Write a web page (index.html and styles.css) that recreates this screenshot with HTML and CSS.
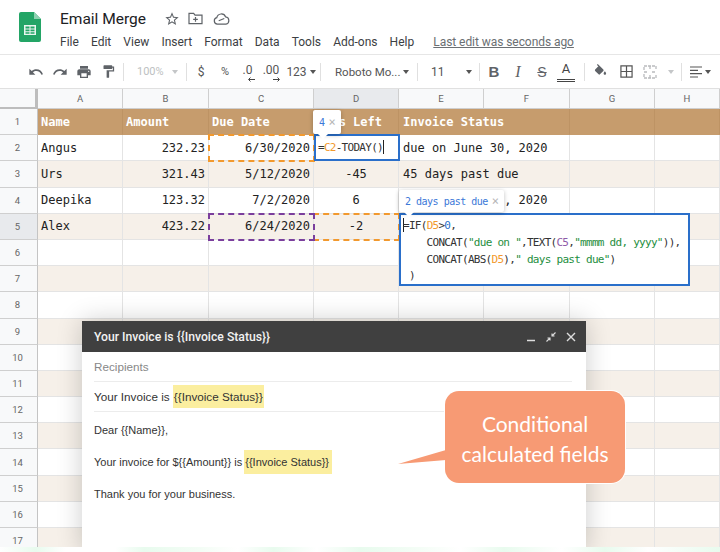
FILE: index.html
```html
<!DOCTYPE html>
<html lang="en">
<head>
    <meta charset="UTF-8">
    <meta name="viewport" content="width=device-width, initial-scale=1.0">
    <title>Email Merge</title>
    <link rel="stylesheet" href="styles.css">
</head>
<body>
<div class="page">
    <header class="top">
        <svg class="logo" viewBox="0 0 22 30" width="22" height="30">
            <path d="M2 0h13l7 7v21a2 2 0 0 1-2 2H2a2 2 0 0 1-2-2V2a2 2 0 0 1 2-2z" fill="#23a566"/>
            <path d="M15 0l7 7h-7z" fill="#8ed1b1"/>
            <path d="M5 13h12v10H5z M6.500 14.500v2h4v-2z M11.500 14.500v2h4v-2z M6.500 17.500v1.800h4v-1.800z M11.500 17.500v1.800h4v-1.800z M6.500 20.300v1.500h4v-1.500z M11.500 20.300v1.500h4v-1.500z" fill="#e8f5ee" fill-rule="evenodd"/>
        </svg>
        <div class="top-main">
            <div class="title-row">
                <span class="doc-title">Email Merge</span>
                <svg class="title-icon star" viewBox="0 0 24 24" width="16" height="16"><path d="M22 9.240l-7.190-.620L12 2 9.190 8.630 2 9.240l5.460 4.730L5.820 21 12 17.270 18.180 21l-1.630-7.030L22 9.240zM12 15.400l-3.760 2.270 1-4.280-3.320-2.880 4.380-.380L12 6.100l1.710 4.040 4.380.380-3.320 2.880 1 4.280L12 15.400z"/></svg>
                <svg class="title-icon" viewBox="0 0 16 14" width="15" height="13"><path d="M1 1.500h5l1.500 1.800H15v9.200H1z" fill="none" stroke="#5f6368" stroke-width="1.300"/><path d="M8 5.500v5M5.500 8h5" stroke="#5f6368" stroke-width="1.300"/></svg>
                <svg class="title-icon" viewBox="0 0 18 13" width="17" height="12"><path d="M4.500 12a3.500 3.500 0 0 1-.6-6.900A5 5 0 0 1 13.500 4.300 3.900 3.900 0 0 1 13.800 12z" fill="none" stroke="#5f6368" stroke-width="1.300"/><path d="M6 8.500l6-2.500" stroke="#5f6368" stroke-width="1.200"/></svg>
            </div>
            <nav class="menu">
                <span>File</span><span>Edit</span><span>View</span><span>Insert</span><span>Format</span><span>Data</span><span>Tools</span><span>Add-ons</span><span>Help</span>
                <a class="last-edit">Last edit was seconds ago</a>
            </nav>
        </div>
    </header>

    <div class="toolbar">
        <span class="tool"><svg viewBox="0 0 24 24" width="16" height="16"><path d="M12.500 8c-2.650 0-5.050.990-6.900 2.600L2 7v9h9l-3.620-3.620c1.390-1.160 3.160-1.880 5.120-1.880 3.540 0 6.550 2.310 7.600 5.500l2.370-.780C21.080 11.030 17.150 8 12.500 8z"/></svg></span>
        <span class="tool"><svg viewBox="0 0 24 24" width="16" height="16"><path d="M18.400 10.600C16.550 8.990 14.150 8 11.500 8c-4.650 0-8.580 3.030-9.960 7.220L3.900 16c1.050-3.190 4.050-5.500 7.600-5.500 1.950 0 3.730.720 5.120 1.880L13 16h9V7l-3.600 3.600z"/></svg></span>
        <span class="tool"><svg viewBox="0 0 24 24" width="16" height="16"><path d="M19 8H5c-1.660 0-3 1.340-3 3v6h4v4h12v-4h4v-6c0-1.660-1.340-3-3-3zm-3 11H8v-5h8v5zm3-7c-.550 0-1-.450-1-1s.450-1 1-1 1 .450 1 1-.450 1-1 1zm-1-9H6v4h12V3z"/></svg></span>
        <span class="tool"><svg viewBox="0 0 24 24" width="15" height="15"><path d="M18 4V3c0-.550-.450-1-1-1H5c-.550 0-1 .450-1 1v4c0 .550.450 1 1 1h12c.550 0 1-.450 1-1V6h1v4H9v11c0 .550.450 1 1 1h2c.550 0 1-.450 1-1v-9h8V4h-3z"/></svg></span>
        <i class="sep sep-a"></i>
        <span class="tool zoom-box off">100%<b class="caret off-caret"></b></span>
        <i class="sep sep-b"></i>
        <span class="tool">$</span>
        <span class="tool pct">%</span>
        <span class="tool dec w21">.0<svg viewBox="0 0 8 5" width="8" height="5"><path d="M8 2.500H2M3.500.500l-2 2 2 2" fill="none" stroke="#444" stroke-width="1"/></svg></span>
        <span class="tool dec w26">.00<svg viewBox="0 0 8 5" width="8" height="5"><path d="M0 2.500h6M4.500.500l2 2-2 2" fill="none" stroke="#444" stroke-width="1"/></svg></span>
        <span class="tool w34">123<b class="caret"></b></span>
        <i class="sep sep-c"></i>
        <span class="tool font-box">Roboto Mo...<b class="caret"></b></span>
        <i class="sep sep-d"></i>
        <span class="tool size-box">11<b class="caret"></b></span>
        <i class="sep sep-e"></i>
        <span class="tool bold">B</span>
        <span class="tool ital">I</span>
        <span class="tool strike">S</span>
        <span class="tool color-a">A</span>
        <i class="sep sep-f"></i>
        <span class="tool"><svg viewBox="0 0 24 24" width="15" height="15"><path d="M16.560 8.940L7.620 0 6.210 1.410l2.380 2.380-5.150 5.150c-.590.590-.590 1.540 0 2.120l5.500 5.500c.290.290.680.440 1.060.440s.770-.150 1.060-.440l5.500-5.500c.590-.580.590-1.530 0-2.120zM19 11.500s-2 2.170-2 3.500c0 1.100.9 2 2 2s2-.9 2-2c0-1.330-2-3.500-2-3.500z"/></svg></span>
        <span class="tool grid-icon"><svg viewBox="0 0 14 14" width="13" height="13"><path d="M1 1h12v12H1zM7 1v12M1 7h12" fill="none" stroke="#555" stroke-width="1.300"/></svg></span>
        <span class="tool"><svg viewBox="0 0 14 14" width="14" height="14"><path d="M1 5V1h12v4M1 9v4h12V9M7 1v3M7 10v3M1 7h4M9 7h4" fill="none" stroke="#b9bbbd" stroke-width="1.300" stroke-dasharray="3 1"/></svg></span>
        <span class="tool w14"><b class="caret off-caret"></b></span>
        <i class="sep sep-g"></i>
        <span class="tool align"><svg viewBox="0 0 12 12" width="12" height="12"><path d="M0 1h12M0 4.300h8M0 7.700h12M0 11h8" stroke="#555" stroke-width="1.200"/></svg><b class="caret"></b></span>
    </div>

    <div class="sheet">
        <div class="corner"></div><div class="col">A</div><div class="col">B</div><div class="col">C</div><div class="col active">D</div><div class="col">E</div><div class="col">F</div><div class="col">G</div><div class="col">H</div>

        <div class="num">1</div><div class="c head">Name</div><div class="c head">Amount</div><div class="c head">Due Date</div><div class="c head days">Days Left</div><div class="c head wide">Invoice Status</div><div class="c head"></div><div class="c head"></div>
        <div class="num">2</div><div class="c">Angus</div><div class="c r">232.23</div><div class="c r dash-orange">6/30/2020</div><div class="c"></div><div class="c wide">due on June 30, 2020</div><div class="c"></div><div class="c"></div>
        <div class="num">3</div><div class="c tan">Urs</div><div class="c tan r">321.43</div><div class="c tan r">5/12/2020</div><div class="c tan m">-45</div><div class="c tan wide">45 days past due</div><div class="c tan"></div><div class="c tan"></div>
        <div class="num">4</div><div class="c">Deepika</div><div class="c r">123.32</div><div class="c r">7/2/2020</div><div class="c m">6</div><div class="c wide">due on July 02, 2020</div><div class="c"></div><div class="c"></div>
        <div class="num active">5</div><div class="c tan">Alex</div><div class="c tan r">423.22</div><div class="c tan r dash-purple">6/24/2020</div><div class="c tan m dash-orange">-2</div><div class="c tan"></div><div class="c tan"></div><div class="c tan"></div><div class="c tan"></div>
        <div class="num">6</div><div class="c"></div><div class="c"></div><div class="c"></div><div class="c"></div><div class="c"></div><div class="c"></div><div class="c"></div><div class="c"></div>
        <div class="num">7</div><div class="c tan"></div><div class="c tan"></div><div class="c tan"></div><div class="c tan"></div><div class="c tan"></div><div class="c tan"></div><div class="c tan"></div><div class="c tan"></div>
        <div class="num">8</div><div class="c"></div><div class="c"></div><div class="c"></div><div class="c"></div><div class="c"></div><div class="c"></div><div class="c"></div><div class="c"></div>
        <div class="num">9</div><div class="c tan"></div><div class="c tan"></div><div class="c tan"></div><div class="c tan"></div><div class="c tan"></div><div class="c tan"></div><div class="c tan"></div><div class="c tan"></div>
        <div class="num">10</div><div class="c"></div><div class="c"></div><div class="c"></div><div class="c"></div><div class="c"></div><div class="c"></div><div class="c"></div><div class="c"></div>
        <div class="num">11</div><div class="c tan"></div><div class="c tan"></div><div class="c tan"></div><div class="c tan"></div><div class="c tan"></div><div class="c tan"></div><div class="c tan"></div><div class="c tan"></div>
        <div class="num">12</div><div class="c"></div><div class="c"></div><div class="c"></div><div class="c"></div><div class="c"></div><div class="c"></div><div class="c"></div><div class="c"></div>
        <div class="num">13</div><div class="c tan"></div><div class="c tan"></div><div class="c tan"></div><div class="c tan"></div><div class="c tan"></div><div class="c tan"></div><div class="c tan"></div><div class="c tan"></div>
        <div class="num">14</div><div class="c"></div><div class="c"></div><div class="c"></div><div class="c"></div><div class="c"></div><div class="c"></div><div class="c"></div><div class="c"></div>
        <div class="num">15</div><div class="c tan"></div><div class="c tan"></div><div class="c tan"></div><div class="c tan"></div><div class="c tan"></div><div class="c tan"></div><div class="c tan"></div><div class="c tan"></div>
        <div class="num">16</div><div class="c"></div><div class="c"></div><div class="c"></div><div class="c"></div><div class="c"></div><div class="c"></div><div class="c"></div><div class="c"></div>
        <div class="num">17</div><div class="c tan"></div><div class="c tan"></div><div class="c tan"></div><div class="c tan"></div><div class="c tan"></div><div class="c tan"></div><div class="c tan"></div><div class="c tan"></div>
    </div>

    <!-- cell editors and hints lie over the grid -->
    <div class="hint hint-days"><span>4</span><em>×</em></div>
    <div class="editor editor-d2">=<span class="ref-orange">C2</span>-TODAY()<i class="text-caret"></i></div>
    <div class="hint hint-status"><span>2 days past due</span><em>×</em></div>
    <div class="editor editor-e5">
        <div class="fx"><i class="text-caret"></i>=IF(<span class="ref-orange">D5</span>&gt;<span class="ref-blue">0</span>,</div>
        <div class="fx fx-in">CONCAT(<span class="str">"due on "</span>,TEXT(<span class="ref-purple">C5</span>,<span class="str">"mmmm dd, yyyy"</span>)),</div>
        <div class="fx fx-in">CONCAT(ABS(<span class="ref-orange">D5</span>),<span class="str">" days past due"</span>)</div>
        <div class="fx fx-end">)</div>
    </div>

    <section class="compose">
        <div class="compose-head">
            <span>Your Invoice is {{Invoice Status}}</span>
            <div class="win-btns">
                <svg viewBox="0 0 10 10" width="10" height="10"><path d="M1 8.500h8" stroke="#ddd" stroke-width="1.500"/></svg>
                <svg viewBox="0 0 10 10" width="10" height="10"><path d="M9.500.500L6 4M6 1.500V4h2.500M.5 9.500L4 6M1.500 6H4v2.500" fill="none" stroke="#ddd" stroke-width="1.100"/></svg>
                <svg viewBox="0 0 10 10" width="10" height="10"><path d="M1 1l8 8M9 1l-8 8" stroke="#ddd" stroke-width="1.400"/></svg>
            </div>
        </div>
        <div class="field recipients">Recipients</div>
        <div class="field subject">Your Invoice is <mark>{{Invoice Status}}</mark></div>
        <div class="mail-body">
            <p>Dear {{Name}},</p>
            <p>Your invoice for ${{Amount}} is <mark>{{Invoice Status}}</mark></p>
            <p>Thank you for your business.</p>
        </div>
    </section>

    <div class="callout">
        <svg class="callout-tail" viewBox="0 0 48 16" width="48" height="16"><path d="M48 0L0 14l48-4z" fill="#f79a74"/></svg>
        Conditional<br>calculated fields
    </div>

    <div class="bottom-strip"></div>
</div>
</body>
</html>
```

FILE: styles.css
```css
* {
    box-sizing: border-box;
}
body {
    margin: 0;
    font-family: Roboto, "Liberation Sans", sans-serif;
    background: #fff;
}
.page {
    position: relative;
    width: 720px;
    height: 552px;
    overflow: hidden;
    background: #fff;
}

/* title and menu */
.top {
    display: flex;
    height: 55px;
    border-bottom: 1px solid #e6e6e6;
    padding: 12px 0 0 19px;
}
.logo {
    margin-right: 19px;
}
.title-row {
    display: flex;
    align-items: center;
    height: 13px;
}
.doc-title {
    font-size: 15.500px;
    color: #202124;
    margin-right: 18px;
}
.title-icon {
    margin-right: 10px;
    fill: #5f6368;
}
.star {
    margin-right: 8px;
}
.menu {
    display: flex;
    margin-top: 7px;
    font-size: 12px;
    line-height: 20px;
    color: #3c4043;
}
.menu span {
    margin-right: 12.100px;
}
.last-edit {
    margin-left: 7px;
    letter-spacing: -.06px;
    color: #6b6f73;
    text-decoration: underline;
}

/* toolbar */
.toolbar {
    display: flex;
    align-items: center;
    height: 34px;
    padding-left: 24px;
    font-size: 12px;
    color: #555;
    border-bottom: 1px solid #e0e0e0;
}
.tool {
    display: flex;
    align-items: center;
    justify-content: center;
    flex: none;
    width: 24px;
    height: 24px;
    fill: #5f6368;
}
.w21 { width: 21px; }
.w26 { width: 26px; }
.w34 { width: 34px; }
.w14 { width: 14px; }
.sep {
    flex: none;
    width: 1px;
    height: 18px;
    background: #e0e0e0;
}
.sep-a { margin: 0 8px 0 3px; }
.sep-b { margin: 0 2px 0 4px; }
.sep-c { margin: 0 6px 0 2px; }
.sep-d { margin: 0 4px; }
.sep-e { margin: 0 2px 0 4px; }
.sep-f { margin: 0 3px 0 6px; }
.sep-g { margin: 0 4px 0 5px; }
.grid-icon { margin-left: 2px; }
.caret {
    display: inline-block;
    width: 0;
    height: 0;
    margin-left: 3px;
    border: 3.500px solid transparent;
    border-top: 4px solid #555;
    border-bottom: 0;
}
.off-caret {
    border-top-color: #c4c6c8;
}
.off {
    color: #bdbfc2;
    font-size: 11px;
}
.zoom-box {
    width: 50px;
    justify-content: space-between;
    padding: 0 4px 0 5px;
}
.font-box {
    width: 86px;
    justify-content: space-between;
    padding: 0 4px 0 8px;
    font-size: 11.500px;
    white-space: nowrap;
}
.size-box {
    width: 53px;
    justify-content: space-between;
    padding: 0 3px 0 9px;
}
.pct {
    font-size: 11px;
}
.dec {
    position: relative;
    font-size: 12px;
    padding-bottom: 3px;
}
.dec svg {
    position: absolute;
    right: 3px;
    bottom: 2px;
}
.bold {
    font-family: "Liberation Sans", sans-serif;
    font-weight: bold;
    font-size: 15px;
    color: #5f6368;
}
.ital {
    font-family: "Liberation Serif", serif;
    font-style: italic;
    font-size: 16px;
    color: #5f6368;
}
.strike {
    font-family: "Liberation Sans", sans-serif;
    font-size: 14px;
    text-decoration: line-through;
    color: #5f6368;
}
.color-a {
    font-size: 13px;
    color: #444;
    height: 21px;
    align-items: flex-start;
    border-bottom: 3px double #444;
    width: 18px;
    margin: 0 3px;
    line-height: 15px;
}
.align {
    width: 36px;
    justify-content: flex-start;
    padding-left: 4px;
}

/* spreadsheet grid */
.sheet {
    display: grid;
    grid-template-columns: 38px 85px 86px 105px 85px 85px 86px 85px 65px;
    grid-template-rows: 20px repeat(17, 26.200px);
    font-family: "DejaVu Sans Mono", "Liberation Mono", monospace;
    font-size: 12px;
    color: #222;
}
.corner {
    background: #f8f9fa;
    border-right: 3px solid #bdbdbd;
    border-bottom: 2px solid #bdbdbd;
}
.col {
    display: flex;
    align-items: center;
    justify-content: center;
    background: #f8f9fa;
    font-family: Roboto, sans-serif;
    font-size: 9.500px;
    color: #666;
    border-right: 1px solid #cfcfcf;
    border-bottom: 1px solid #cfcfcf;
}
.num {
    display: flex;
    align-items: center;
    justify-content: center;
    background: #f8f9fa;
    font-family: Roboto, sans-serif;
    font-size: 9.500px;
    color: #666;
    border-right: 1px solid #c4c4c4;
    border-bottom: 1px solid #cfcfcf;
    padding-right: 2px;
}
.active {
    background: #e8eaed;
}
.c {
    display: flex;
    align-items: center;
    padding: 0 3px;
    white-space: nowrap;
    background: #fff;
    border-right: 1px solid #e4e4e4;
    border-bottom: 1px solid #e4e4e4;
}
.tan {
    background: #f6f0e9;
}
.head {
    background: #c69c6d;
    color: #fff;
    font-weight: bold;
    border-color: #c69c6d;
    border-right-color: #bd9364;
}
.r {
    justify-content: flex-end;
}
.m {
    justify-content: center;
}
.wide {
    grid-column: span 2;
    padding-left: 4px;
}
.dash-orange {
    outline: 2px dashed #f2992e;
    outline-offset: -1px;
    position: relative;
    z-index: 1;
}
.dash-purple {
    outline: 2px dashed #7b3f9d;
    outline-offset: -1px;
    position: relative;
    z-index: 2;
}

/* editors and hints over the cells */
.editor {
    position: absolute;
    z-index: 4;
    background: #fff;
    border: 2px solid #2a6fca;
    font-family: "DejaVu Sans Mono", monospace;
    font-size: 11px;
    letter-spacing: -.72px;
    color: #333;
    white-space: nowrap;
}
.editor-d2 {
    left: 314px;
    top: 134px;
    width: 86px;
    height: 27px;
    padding: 3px 0 0 2px;
    line-height: 18px;
}
.editor-e5 {
    left: 399px;
    top: 213px;
    width: 291px;
    height: 73px;
    padding: 2px 0 0 2px;
}
.fx {
    height: 17px;
    line-height: 17px;
}
.fx-in {
    padding-left: 23.600px;
}
.fx-end {
    padding-left: 6px;
    height: 16px;
    line-height: 16px;
}
.text-caret {
    display: inline-block;
    width: 1px;
    height: 14px;
    background: #222;
    vertical-align: -3px;
}
.fx .text-caret {
    margin-right: -1px;
}
.ref-orange { color: #f2992e; }
.ref-purple { color: #8e5aa8; }
.ref-blue { color: #2a6fca; }
.str { color: #1e8e3e; }
.hint {
    position: absolute;
    z-index: 5;
    display: flex;
    align-items: center;
    gap: 4px;
    background: #fff;
    box-shadow: 0 1px 4px rgba(0, 0, 0, .25);
    border-radius: 2px;
    font-family: "DejaVu Sans Mono", monospace;
    font-size: 10px;
    letter-spacing: -.5px;
    white-space: nowrap;
    color: #3b78d8;
    padding: 0 6px;
}
.hint em {
    font-style: normal;
    font-size: 12px;
    color: #b5b5b5;
}
.hint::after {
    content: "";
    position: absolute;
    bottom: -5px;
    left: 5px;
    border: 5px solid transparent;
    border-top: 5px solid #fff;
    border-bottom: 0;
}
.hint-days {
    left: 313px;
    top: 110px;
    width: 28px;
    height: 24px;
}
.hint-status {
    left: 399px;
    top: 190px;
    width: 105px;
    height: 22px;
}

/* compose window */
.compose {
    position: absolute;
    z-index: 6;
    left: 82px;
    top: 321px;
    width: 504px;
    height: 231px;
    background: #fff;
    box-shadow: 0 0 24px rgba(0, 0, 0, .2);
    font-family: "Liberation Sans", sans-serif;
    font-size: 11px;
    color: #333;
}
.compose-head {
    display: flex;
    align-items: center;
    justify-content: space-between;
    height: 31px;
    padding: 0 10px 0 12px;
    background: #404040;
    color: #f2f2f2;
    font-family: Roboto, sans-serif;
    font-size: 12.200px;
    font-weight: 500;
}
.win-btns {
    display: flex;
    gap: 10px;
}
.field {
    display: flex;
    align-items: center;
    margin: 0 14px 0 12px;
    border-bottom: 1px solid #ececec;
    font-size: 11.700px;
}
.recipients {
    height: 30px;
    color: #888;
}
.subject {
    height: 30px;
    white-space: pre;
}
mark {
    background: #fbee9f;
    color: #333;
    padding: 5px 1px;
}
.mail-body {
    padding: 11px 12px;
}
.mail-body p {
    margin: 0 0 18px;
    line-height: 14px;
}
.mail-body mark {
    margin-left: -1px;
    padding: 6px 3px 6px 1px;
}

/* callout */
.callout {
    position: absolute;
    z-index: 7;
    left: 445px;
    top: 391px;
    width: 180px;
    height: 92px;
    padding-top: 18px;
    background: #f79a74;
    border-radius: 14px;
    box-shadow: 0 0 0 1px #fff;
    font-family: Lato, sans-serif;
    font-size: 21px;
    line-height: 30px;
    text-align: center;
    color: #fff;
}
.callout-tail {
    position: absolute;
    left: -47px;
    top: 59px;
}

.bottom-strip {
    position: absolute;
    z-index: 8;
    left: 0;
    right: 0;
    bottom: 0;
    height: 5px;
    background: linear-gradient(90deg, #fff 0, #e8fbee 5%, #fff 9%, #fff 16%, #e8fbee 20%, #f4fdf6 28%, #fff 33%, #e8fbee 38%, #fff 44%, #e8fbee 50%, #f4fdf6 58%, #fff 64%, #e8fbee 70%, #fff 78%, #e8fbee 84%, #fff 90%, #e8fbee 100%);
}
```
